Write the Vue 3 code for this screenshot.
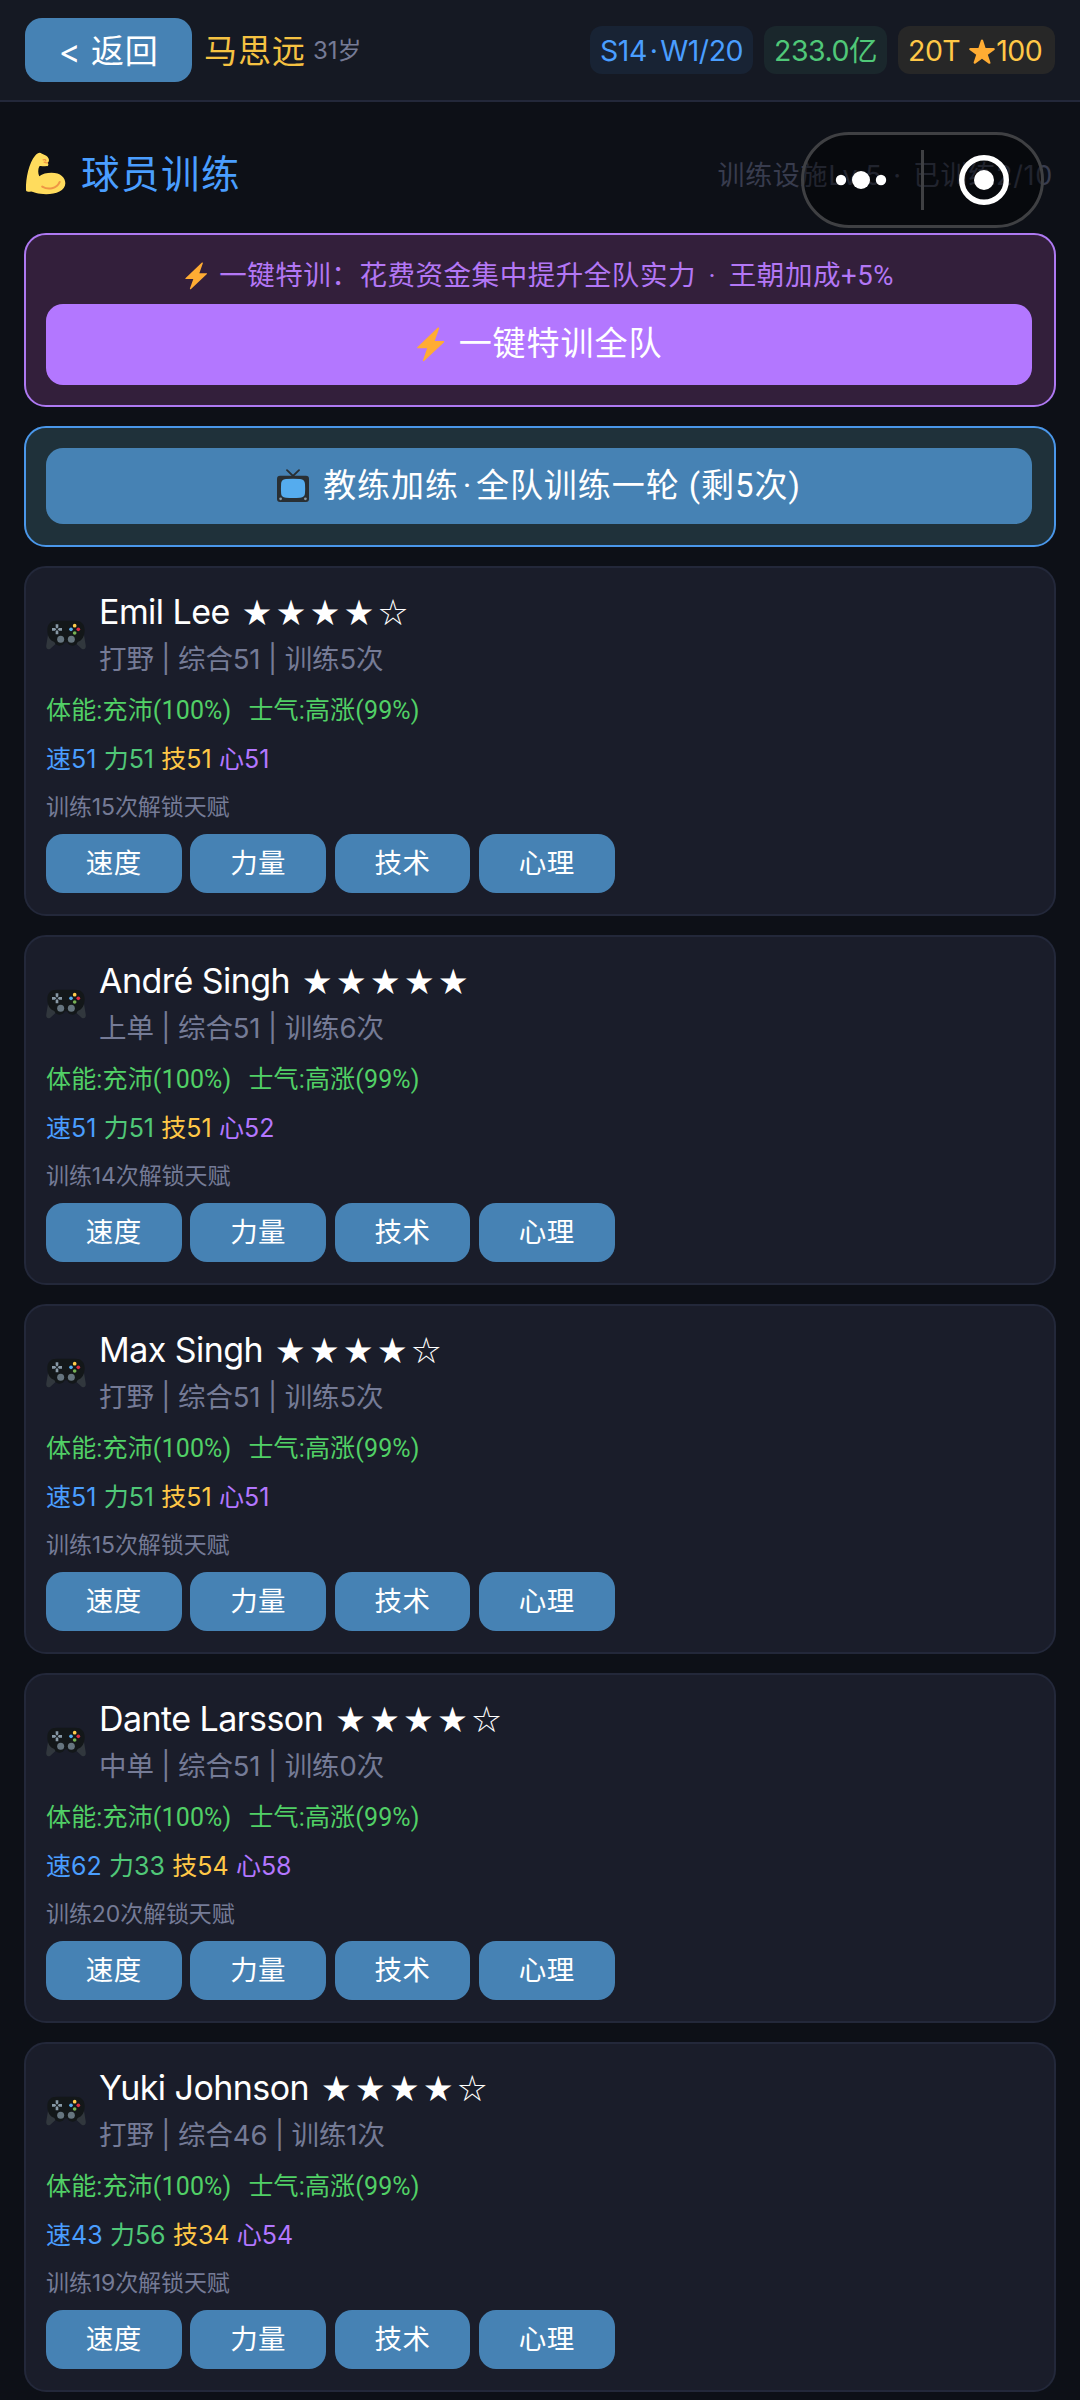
<script setup>
const players = [
  { name: 'Emil Lee', stars: '★★★★☆', role: '打野', overall: 51, trained: 5, stats: [51, 51, 51, 51], unlock: 15 },
  { name: 'André Singh', stars: '★★★★★', role: '上单', overall: 51, trained: 6, stats: [51, 51, 51, 52], unlock: 14 },
  { name: 'Max Singh', stars: '★★★★☆', role: '打野', overall: 51, trained: 5, stats: [51, 51, 51, 51], unlock: 15 },
  { name: 'Dante Larsson', stars: '★★★★☆', role: '中单', overall: 51, trained: 0, stats: [62, 33, 54, 58], unlock: 20 },
  { name: 'Yuki Johnson', stars: '★★★★☆', role: '打野', overall: 46, trained: 1, stats: [43, 56, 34, 54], unlock: 19 }
]
const statKeys = [
  { label: '速', tone: 'blue' },
  { label: '力', tone: 'green' },
  { label: '技', tone: 'gold' },
  { label: '心', tone: 'purple' }
]
const drills = ['速度', '力量', '技术', '心理']
</script>

<template>
  <div class="page">
    <header class="topbar">
      <button class="back"><span>&lt; 返回</span></button>
      <span class="manager">马思远</span>
      <span class="age">31岁</span>
      <div class="chips">
        <span class="chip chip-blue">S14<i class="dot">·</i>W1/20</span>
        <span class="chip chip-green">233.0亿</span>
        <span class="chip chip-gold">20T
          <svg class="star" viewBox="0 0 36 36"><path fill="#ffac33" d="M27.3 34.5a1.6 1.6 0 0 1-.9-.3L18 28.1l-8.4 6.1a1.5 1.5 0 0 1-2.3-1.7l3.2-9.8-8.4-5.9A1.5 1.5 0 0 1 3 14.1h10.4l3.2-9.8a1.5 1.5 0 0 1 2.8 0l3.2 9.8H33a1.5 1.5 0 0 1 .9 2.7l-8.4 5.9 3.3 9.8a1.5 1.5 0 0 1-1.5 2z"/></svg>100</span>
      </div>
    </header>

    <div class="heading">
      <svg class="arm" viewBox="76 68 124 129">
        <path fill="#ffdc5d" d="M79 182C78 146 88 100 107 78C114 70 121 68 126 72C132 76 140 76 144 82C150 89 150 96 145 100C149 106 146 112 140 110C132 113 124 107 119 111C115 119 115 131 119 141C128 133 142 130 156 130C184 130 198 145 198 162C198 184 170 195 140 195C115 195 100 188 95 187C85 188 79 189 79 182Z"/>
        <path fill="none" stroke="#ef9645" stroke-width="6" stroke-linecap="round" d="M128 172C146 183 172 179 181 158"/>
        <path fill="none" stroke="#ef9645" stroke-width="4" stroke-linecap="round" d="M131 91q7-2 8 3m-5 4q6 3 10 2"/>
      </svg>
      <h1>球员训练</h1>
      <span class="facility">训练设施Lv.5 <i class="mid">·</i> 已训练2/10</span>
      <div class="capsule">
        <svg viewBox="0 0 243 96" width="243" height="96">
          <rect x="1.5" y="1.5" width="240" height="93" rx="46.5" fill="#000" fill-opacity=".4" stroke="#3f4043" stroke-width="3"/>
          <g fill="#fff"><circle cx="40" cy="48" r="5.2"/><circle cx="60" cy="48" r="9"/><circle cx="80" cy="48" r="5.2"/><circle cx="183" cy="48" r="10"/></g>
          <path d="M121.5 18v60" stroke="#3f4043" stroke-width="3"/>
          <circle cx="183" cy="48" r="22.3" fill="none" stroke="#fff" stroke-width="5.4"/>
        </svg>
      </div>
    </div>

    <section class="panel intensive">
      <p class="hint">
        <svg class="bolt-s" viewBox="0 0 34 42"><path fill="#ffac33" d="M25.5 1 1.5 24c-1 1-.5 1.600.5 1.600h11L8 39.500c-.5 1.500.5 2 1.600 1L33 18.500c1-1 .5-1.700-.6-1.700H22L27.300 2c.4-1.200-.8-1.900-1.800-1z"/></svg>
        <span>一键特训：花费资金集中提升全队实力 <i class="mid">·</i> 王朝加成+5%</span>
      </p>
      <button class="wide purple-btn">
        <svg class="bolt-l" viewBox="0 0 34 42"><path fill="#ffac33" d="M25.5 1 1.5 24c-1 1-.5 1.600.5 1.600h11L8 39.500c-.5 1.500.5 2 1.600 1L33 18.500c1-1 .5-1.700-.6-1.700H22L27.300 2c.4-1.200-.8-1.900-1.800-1z"/></svg>
        <span>一键特训全队</span>
      </button>
    </section>

    <section class="panel coach">
      <button class="wide">
        <svg class="tv" viewBox="0 0 32 34">
          <path fill="none" stroke="#292f33" stroke-width="1.800" stroke-linecap="round" d="M10 1.200 16 7l6-5.800"/>
          <rect x="0" y="6.800" width="32" height="26.200" rx="3" fill="#292f33"/>
          <path fill="#55acee" d="M9 10Q16 9.300 23 10C26.500 10.300 27.800 12 28 15Q28.300 19.500 28 24C27.800 27 26.500 28.400 23 28.700Q16 29.300 9 28.700C5.500 28.400 4.300 27 4.100 24Q3.800 19.500 4.100 15C4.300 12 5.500 10.300 9 10z"/>
          <circle cx="3.600" cy="29.800" r="1.400" fill="#8899a6"/><circle cx="28.400" cy="29.800" r="1.400" fill="#8899a6"/>
        </svg>
        <span>教练加练<i class="dot">·</i>全队训练一轮 (剩5次)</span>
      </button>
    </section>

    <section v-for="p in players" :key="p.name" class="card">
      <div class="identity">
        <svg class="pad" viewBox="0 0 120 88">
          <path fill="#31373d" d="M8 32 1 74c-2 12 5 15 12 11l22-20zM112 32l7 42c2 12-5 15-12 11L85 65z"/>
          <path fill="#131719" d="M32 1h56c18 0 28 10 28 28 0 20-8 32-21 36-3 8-9 11-16 11-8 0-13-4-15-10h-8c-2 6-7 10-15 10-7 0-13-3-16-11C12 61 4 49 4 29 4 11 14 1 32 1z"/>
          <path fill="#8899a6" d="M29 12h8v9l-4 4-4-4zM29 42h8v-9l-4-4-4 4zM18 23v8h9l4-4-4-4zM48 23v8h-9l-4-4 4-4z"/>
          <circle cx="44" cy="57" r="10.500" fill="#66757f"/><circle cx="76" cy="57" r="10.500" fill="#66757f"/>
          <circle cx="86" cy="16" r="5.500" fill="#ffcc4d"/><circle cx="97" cy="27" r="5.500" fill="#dd2e44"/><circle cx="86" cy="38" r="5.500" fill="#77b255"/><circle cx="75" cy="27" r="5.500" fill="#55acee"/>
        </svg>
        <div class="who">
          <div class="name">{{ p.name }}<span class="stars">{{ p.stars }}</span></div>
          <div class="sub">{{ p.role }} | 综合{{ p.overall }} | 训练{{ p.trained }}次</div>
        </div>
      </div>
      <div class="status"><span>体能:充沛(100%)</span><span>士气:高涨(99%)</span></div>
      <div class="stats">
        <span v-for="(k, i) in statKeys" :key="k.label" :class="k.tone">{{ k.label }}{{ p.stats[i] }}</span>
      </div>
      <div class="talent">训练{{ p.unlock }}次解锁天赋</div>
      <div class="drills">
        <button v-for="d in drills" :key="d"><span>{{ d }}</span></button>
      </div>
    </section>
  </div>
</template>

<style>
body { margin: 0; background: #0d1017; }
</style>

<style scoped>
.page {
  box-sizing: border-box;
  width: 1080px;
  height: 2400px;
  overflow: hidden;
  background: #0d1017;
  color: #fff;
  font-family: Inter, "Noto Sans CJK SC", sans-serif;
}
button {
  border: 0;
  padding: 0 0 1px;
  margin: 0;
  color: #fff;
  font-family: inherit;
  background: #4682b4;
  border-radius: 17px;
}
svg { display: block; flex: none; }
i { font-style: normal; display: inline-block; text-align: center; }
.topbar {
  box-sizing: border-box;
  height: 102px;
  padding: 0 25px;
  display: flex;
  align-items: center;
  background: #151923;
  border-bottom: 2px solid #23283a;
}
.back { width: 167px; height: 64px; padding: 2px 0 0; font-size: 33px; letter-spacing: .6px; line-height: 44px; }
.manager { margin: 2px 0 0 12px; font-size: 33px; line-height: 44px; letter-spacing: 1px; color: #f5c242; }
.age { margin: 2px 0 0 7px; font-size: 24px; line-height: 40px; color: #757b96; }
.chips { margin-left: auto; display: flex; gap: 11px; }
.chip {
  box-sizing: border-box;
  height: 48px;
  padding: 2px 10px 0;
  display: flex;
  align-items: center;
  border-radius: 12px;
  font-size: 28.500px;
  line-height: 46px;
  letter-spacing: -.5px;
  white-space: nowrap;
}
.chip-blue { width: 163px; color: #4a9eff; background: #182334; }
.chip-blue .dot { width: 14px; }
.chip-green { width: 123px; color: #50c878; background: #1a272c; }
.chip-gold { width: 157px; color: #ffc847; background: #272727; }
.star { width: 28px; height: 28px; margin-left: 8px; }
.heading {
  position: relative;
  height: 131px;
  padding: 0 27px 0 25px;
  display: flex;
  align-items: center;
}
.arm { width: 41px; height: 43px; margin-top: 12px; }
h1 { margin: 12px 0 0 15px; font-size: 38.500px; line-height: 50px; font-weight: 400; letter-spacing: 1.500px; color: #4a9eff; }
.facility { margin: 16px 0 0 auto; font-size: 27px; line-height: 40px; letter-spacing: .7px; color: #383c4e; white-space: nowrap; }
.capsule { position: absolute; left: 801px; top: 30px; }
.panel {
  box-sizing: border-box;
  margin: 0 24px;
  padding: 0 22px 0 20px;
  border: 2px solid;
  border-radius: 22px;
}
.intensive { height: 174px; background: #331f3b; border-color: #ae79f2; }
.coach { height: 121px; margin-top: 19px; padding-top: 20px; background: #1f313a; border-color: #4a97ea; }
.hint {
  margin: 0;
  padding-top: 16px;
  height: 53px;
  line-height: 50px;
  display: flex;
  align-items: flex-start;
  justify-content: center;
  gap: 11px;
  font-family: Roboto, "Noto Sans CJK SC", sans-serif;
  font-size: 27.500px;
  letter-spacing: .55px;
  color: #b377f5;
  white-space: nowrap;
}
.mid { width: 14px; }
.hint .mid { width: 18px; }
.bolt-s { width: 24px; height: 28px; margin-top: 11px; }
.wide {
  width: 100%;
  height: 76px;
  display: flex;
  align-items: center;
  justify-content: center;
  gap: 14px;
  font-family: Roboto, "Noto Sans CJK SC", sans-serif;
  font-size: 33px;
  line-height: 44px;
  letter-spacing: .95px;
}
.purple-btn { height: 81px; background: #b377ff; }
.bolt-l { width: 29px; height: 35px; }
.tv { width: 32px; height: 34px; }
.dot { width: 17px; }
.card {
  box-sizing: border-box;
  height: 350px;
  margin: 19px 24px 0;
  padding: 22px 20px 0;
  background: #1a1d2a;
  border: 2px solid #23283a;
  border-radius: 22px;
}
.card + .card { margin-top: 19.100px; }
.identity { display: flex; align-items: flex-start; height: 92px; }
.pad { width: 40px; height: 30px; margin-top: 30px; }
.who { margin-left: 13px; }
.name { font-size: 34px; line-height: 43px; letter-spacing: -.55px; white-space: nowrap; display: flex; }
.stars { margin-left: 13px; line-height: 41px; font-size: 28.500px; letter-spacing: 5.500px; font-family: "Noto Sans CJK SC", sans-serif; }
.sub { font-size: 27.500px; line-height: 52px; letter-spacing: -.12px; color: #757b96; white-space: nowrap; }
.status { margin-top: 12px; display: flex; gap: 17px; font-family: Roboto, "Noto Sans CJK SC", sans-serif; font-size: 25px; line-height: 33px; letter-spacing: .15px; color: #51d066; }
.stats { margin-top: 16px; display: flex; gap: 7.300px; font-size: 25px; line-height: 32px; }
.talent { margin-top: 16px; font-size: 23px; line-height: 32px; letter-spacing: -.1px; color: #757b96; }
.blue { color: #4a9eff; }
.green { color: #50c878; }
.gold { color: #ffc847; }
.purple { color: #b377ff; }
.drills { margin-top: 11px; display: flex; gap: 8.600px; }
.drills button { width: 135.700px; height: 59px; font-size: 27.500px; line-height: 36px; letter-spacing: .5px; }
</style>
